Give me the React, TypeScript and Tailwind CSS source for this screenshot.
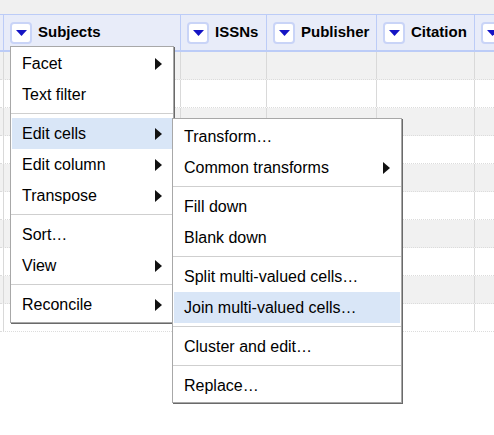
import { ReactNode } from "react";

const font = { fontFamily: '"Liberation Sans", Arial, sans-serif' };

const columns = [
  { name: "", width: 3, edge: true },
  { name: "Subjects", width: 177 },
  { name: "ISSNs", width: 86 },
  { name: "Publisher", width: 110 },
  { name: "Citation", width: 98 },
  { name: "", width: 40 },
];

function DropButton() {
  return (
    <span className="w-[22px] h-[22px] shrink-0 rounded-[4px] border-2 border-[#c9d4f7] bg-white flex items-center justify-center">
      <svg width="11" height="6" viewBox="0 0 11 6">
        <polygon points="0,0 11,0 5.5,6" fill="#1414c4" />
      </svg>
    </span>
  );
}

function Arrow() {
  return (
    <svg width="7" height="12" viewBox="0 0 7 12" className="shrink-0">
      <polygon points="0,0 7,6 0,12" fill="#111" />
    </svg>
  );
}

function Item({
  children,
  sub,
  active,
}: {
  children: ReactNode;
  sub?: boolean;
  active?: boolean;
}) {
  return (
    <div
      className={`h-[31px] mx-px flex items-center justify-between pl-[10px] pr-[10px] text-[16px] text-black ${
        active ? "bg-[#d9e6f7]" : ""
      }`}
    >
      <span>{children}</span>
      {sub && <Arrow />}
    </div>
  );
}

function Sep() {
  return <div className="h-px bg-[#cfcfcf] mt-[3px] mb-[4px]" />;
}

export default function App() {
  const rows = Array.from({ length: 10 });

  return (
    <div
      className="w-[494px] h-[435px] relative overflow-hidden bg-white"
      style={font}
    >
      <div className="h-[14px] bg-[#f0f0f0]" />

      {/* header */}
      <div className="flex h-[38px] bg-[#e8ecf9] border-t border-b-2 border-[#bcccf7]">
        {columns.map((c, i) =>
          c.edge ? (
            <div key={i} className="shrink-0" style={{ width: c.width }} />
          ) : (
            <div
              key={i}
              className="flex items-center gap-[6px] pl-[6px] border-l border-[#bcccf7] shrink-0"
              style={{ width: c.width }}
            >
              <DropButton />
              {c.name && (
                <span className="font-bold text-[15px] text-black">
                  {c.name}
                </span>
              )}
            </div>
          )
        )}
      </div>

      {/* rows */}
      {rows.map((_, r) => (
        <div
          key={r}
          className={`flex h-[28px] border-b border-dotted border-[#dcdcdc] ${
            r % 2 === 0 ? "bg-[#f1f1f1]" : "bg-white"
          }`}
        >
          {columns.map((c, i) => (
            <div
              key={i}
              className={`shrink-0 ${c.edge ? "" : "border-l border-[#d9d9d9]"}`}
              style={{ width: c.width }}
            />
          ))}
        </div>
      ))}

      {/* column menu */}
      <div className="absolute left-[10px] top-[46px] w-[164px] bg-white border border-[#a8a8a8] shadow-[1px_1px_0_#6a6a6a] pt-px pb-[2px]">
        <Item sub>Facet</Item>
        <Item>Text filter</Item>
        <Sep />
        <Item sub active>
          Edit cells
        </Item>
        <Item sub>Edit column</Item>
        <Item sub>Transpose</Item>
        <Sep />
        <Item>Sort…</Item>
        <Item sub>View</Item>
        <Sep />
        <Item sub>Reconcile</Item>
      </div>

      {/* edit cells submenu */}
      <div className="absolute left-[172px] top-[118px] w-[230px] bg-white border border-[#a8a8a8] shadow-[1px_1px_0_#6a6a6a] pt-[2px] pb-px">
        <Item>Transform…</Item>
        <Item sub>Common transforms</Item>
        <Sep />
        <Item>Fill down</Item>
        <Item>Blank down</Item>
        <Sep />
        <Item>Split multi-valued cells…</Item>
        <Item active>Join multi-valued cells…</Item>
        <Sep />
        <Item>Cluster and edit…</Item>
        <Sep />
        <Item>Replace…</Item>
      </div>
    </div>
  );
}
